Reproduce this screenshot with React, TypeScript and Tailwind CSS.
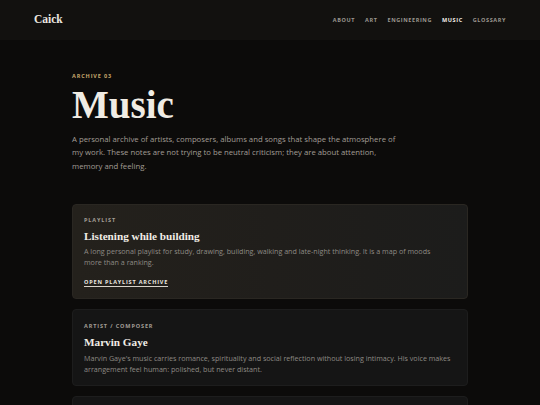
import React from 'react'

const nav = ['About', 'Art', 'Engineering', 'Music', 'Glossary']

const sans = "font-['Open_Sans','Noto_Sans',sans-serif]"
const serif = "font-['Liberation_Serif','DejaVu_Serif',serif]"

function Label({ children }: { children: React.ReactNode }) {
  return (
    <p className={`${sans} text-[5.5px] leading-[8px] font-bold uppercase tracking-[0.16em] text-[#a39e96]`}>
      {children}
    </p>
  )
}

export default function App() {
  return (
    <div className="min-h-screen bg-[#0c0b0a] overflow-hidden">
      <header className="h-10 bg-[#12110f] flex items-center justify-between px-[34px]">
        <span className={`${serif} text-[11.5px] font-bold text-[#ece8e0]`}>Caick</span>
        <nav className={`${sans} flex items-center gap-[10px] text-[5.5px] font-bold uppercase tracking-[0.11em]`}>
          {nav.map((item) => (
            <a key={item} className={item === 'Music' ? 'text-[#f2efe9]' : 'text-[#9c978f]'}>
              {item}
            </a>
          ))}
        </nav>
      </header>

      <main className="w-[396px] mx-auto pt-[32px]">
        <p className={`${sans} text-[5.5px] leading-[8px] font-bold uppercase tracking-[0.16em] text-[#c6a66c]`}>
          Archive 03
        </p>
        <h1 className={`${serif} mt-[5px] text-[39px] leading-[40px] font-bold text-[#f0ece4]`}>Music</h1>
        <p className={`${sans} mt-[7.5px] w-[330px] text-[7.75px] leading-[13.7px] text-[#a29d95]`}>
          A personal archive of artists, composers, albums and songs that shape the atmosphere of my work.
          These notes are not trying to be neutral criticism; they are about attention, memory and feeling.
        </p>

        <section className="mt-[30px] rounded-[4px] border border-[#2a2722] bg-gradient-to-r from-[#24211c] via-[#201e1b] to-[#1c1c1b] px-[11px] pt-[11px] pb-[11px]">
          <Label>Playlist</Label>
          <h2 className={`${serif} mt-[4px] text-[11.2px] leading-[16px] font-bold text-[#f1ede6]`}>
            Listening while building
          </h2>
          <p className={`${sans} mt-[2.5px] text-[7.15px] leading-[11px] text-[#8e8a84]`}>
            A long personal playlist for study, drawing, building, walking and late-night thinking. It is a map of moods
            <br />
            more than a ranking.
          </p>
          <a
            className={`${sans} mt-[10px] block w-fit border-b border-[#d8d3ca] text-[5.5px] leading-[8px] font-bold uppercase tracking-[0.15em] text-[#ece8e0]`}
          >
            Open playlist archive
          </a>
        </section>

        <section className="mt-[10px] rounded-[4px] border border-[#1d1d1d] bg-[#151515] px-[11px] pt-[12px] pb-[10.5px]">
          <Label>Artist / Composer</Label>
          <h2 className={`${serif} mt-[4.3px] text-[11.2px] leading-[16px] font-bold text-[#f1ede6]`}>Marvin Gaye</h2>
          <p className={`${sans} mt-[2.2px] text-[7.15px] leading-[11px] text-[#8e8a84] whitespace-nowrap`}>
            Marvin Gaye's music carries romance, spirituality and social reflection without losing intimacy. His voice makes
            <br />
            arrangement feel human: polished, but never distant.
          </p>
        </section>

        <section className="mt-[10px] h-[80px] rounded-[4px] border border-[#1d1d1d] bg-[#151515]" />
      </main>
    </div>
  )
}
